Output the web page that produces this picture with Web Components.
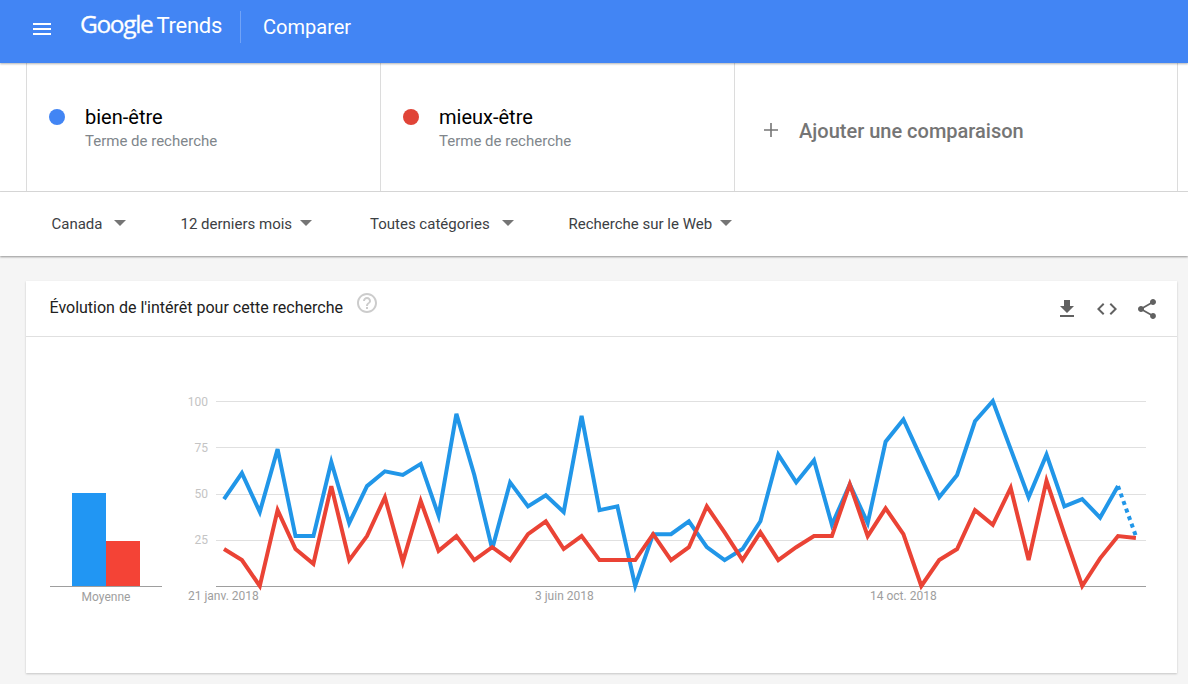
<!DOCTYPE html>
<html lang="fr">
<head>
<meta charset="utf-8">
<title>Google Trends</title>
<style>
    html, body { margin: 0; height: 100%; overflow: hidden; background: #f5f5f5; font-family: Roboto, sans-serif; }
</style>
</head>
<body>
<trends-header></trends-header>
<term-bar>
    <term-item color="#4285f4" name="bien-être" kind="Terme de recherche"></term-item>
    <term-item color="#e04437" name="mieux-être" kind="Terme de recherche"></term-item>
    <add-term>Ajouter une comparaison</add-term>
</term-bar>
<filter-bar>
    <filter-select style="width:129px; --gap:12px">Canada</filter-select>
    <filter-select style="width:189.5px">12 derniers mois</filter-select>
    <filter-select style="width:198.5px; --gap:12px">Toutes catégories</filter-select>
    <filter-select>Recherche sur le Web</filter-select>
</filter-bar>
<trend-card heading="Évolution de l'intérêt pour cette recherche">
    <trend-chart></trend-chart>
</trend-card>

<script>
class TrendsHeader extends HTMLElement {
    constructor() {
        super();
        this.attachShadow({ mode: 'open' });
    }

    connectedCallback() {
        this.shadowRoot.innerHTML = `
            <style>
                :host {
                    display: flex;
                    align-items: center;
                    position: relative;
                    z-index: 2;
                    box-sizing: border-box;
                    height: 63px;
                    padding-bottom: 8px;
                    background: #4285f4;
                    box-shadow: 0 1px 2px rgba(0, 0, 0, 0.3);
                    color: #fff;
                    font-family: Roboto, sans-serif;
                }
                .menu { width: 24px; height: 24px; margin: 2px 0 0 30px; fill: #fff; }
                .logo { display: flex; align-items: baseline; margin: -5px 0 0 26px; white-space: nowrap; }
                .google { font: 400 24.5px/32px "Open Sans", sans-serif; letter-spacing: -1.35px; -webkit-text-stroke: 0.3px #fff; }
                .trends { font: 400 22px/32px Roboto, sans-serif; margin-left: 4px; letter-spacing: -0.25px; }
                .divider { width: 1px; height: 32px; margin: -1px 0 0 18px; background: rgba(255, 255, 255, 0.25); }
                .page { font-size: 20px; margin: -1px 0 0 22px; }
            </style>
            <svg class="menu" viewBox="0 0 24 24"><path d="M3 18h18v-2H3v2zm0-5h18v-2H3v2zm0-7v2h18V6H3z"/></svg>
            <div class="logo"><span class="google">Google</span><span class="trends">Trends</span></div>
            <div class="divider"></div>
            <div class="page">Comparer</div>
        `;
    }
}

class TermBar extends HTMLElement {
    constructor() {
        super();
        this.attachShadow({ mode: 'open' });
    }

    connectedCallback() {
        this.shadowRoot.innerHTML = `
            <style>
                :host {
                    display: block;
                    height: 129px;
                    box-sizing: border-box;
                    background: #fff;
                    border-bottom: 1px solid #dcdcdc;
                    padding: 0 10px 0 26px;
                }
                .row {
                    display: grid;
                    grid-template-columns: 354px 354px 1fr;
                    height: 100%;
                    border-left: 1px solid #dcdcdc;
                    border-right: 1px solid #dcdcdc;
                }
            </style>
            <div class="row"><slot></slot></div>
        `;
    }
}

class TermItem extends HTMLElement {
    constructor() {
        super();
        this.attachShadow({ mode: 'open' });
    }

    connectedCallback() {
        this.shadowRoot.innerHTML = `
            <style>
                :host {
                    display: flex;
                    box-sizing: border-box;
                    border-right: 1px solid #dcdcdc;
                    padding: 40.5px 0 0 22px;
                    font-family: Roboto, sans-serif;
                }
                .dot { width: 16px; height: 16px; margin: 5px 20px 0 0; border-radius: 50%; background: ${this.getAttribute('color')}; }
                .name { font-size: 20px; line-height: 26px; color: #000; }
                .kind { font-size: 15px; line-height: 23px; color: #80868b; }
            </style>
            <div class="dot"></div>
            <div>
                <div class="name">${this.getAttribute('name')}</div>
                <div class="kind">${this.getAttribute('kind')}</div>
            </div>
        `;
    }
}

class AddTerm extends HTMLElement {
    constructor() {
        super();
        this.attachShadow({ mode: 'open' });
    }

    connectedCallback() {
        this.shadowRoot.innerHTML = `
            <style>
                :host {
                    display: flex;
                    align-items: center;
                    padding: 8px 0 0 28px;
                    font: 500 20px Roboto, sans-serif;
                    color: #757575;
                }
                svg { width: 16px; height: 16px; margin: -2px 20px 0 0; stroke: #757575; stroke-width: 1.6; }
            </style>
            <svg viewBox="0 0 16 16"><path d="M8 1v14M1 8h14"/></svg>
            <slot></slot>
        `;
    }
}

class FilterBar extends HTMLElement {
    constructor() {
        super();
        this.attachShadow({ mode: 'open' });
    }

    connectedCallback() {
        this.shadowRoot.innerHTML = `
            <style>
                :host {
                    display: flex;
                    align-items: center;
                    position: relative;
                    height: 64px;
                    padding-left: 51.5px;
                    background: #fff;
                    box-shadow: 0 1px 2px rgba(0, 0, 0, 0.4);
                }
            </style>
            <slot></slot>
        `;
    }
}

class FilterSelect extends HTMLElement {
    constructor() {
        super();
        this.attachShadow({ mode: 'open' });
    }

    connectedCallback() {
        this.shadowRoot.innerHTML = `
            <style>
                :host {
                    display: flex;
                    align-items: center;
                    flex: none;
                    font: 400 15px Roboto, sans-serif;
                    color: #3c4043;
                    white-space: nowrap;
                }
                .arrow {
                    width: 0;
                    height: 0;
                    margin: -3px 0 0 var(--gap, 8px);
                    border-left: 6px solid transparent;
                    border-right: 6px solid transparent;
                    border-top: 6px solid #757575;
                }
            </style>
            <slot></slot>
            <div class="arrow"></div>
        `;
    }
}

class TrendCard extends HTMLElement {
    constructor() {
        super();
        this.attachShadow({ mode: 'open' });
    }

    connectedCallback() {
        this.shadowRoot.innerHTML = `
            <style>
                :host {
                    display: block;
                    width: 1151px;
                    height: 392px;
                    margin: 25px 0 0 26px;
                    background: #fff;
                    box-shadow: 0 1px 2px rgba(0, 0, 0, 0.2);
                    font-family: Roboto, sans-serif;
                }
                header {
                    display: flex;
                    align-items: center;
                    box-sizing: border-box;
                    height: 56px;
                    padding: 0 18px 3px 23.5px;
                    border-bottom: 1px solid #e0e0e0;
                    color: #212121;
                    font-size: 16px;
                }
                .help { width: 24px; height: 24px; margin: -8px 0 0 12px; fill: #ccc; }
                .actions { display: flex; align-items: center; gap: 16px; margin: 3px 0 0 auto; }
                .actions svg { width: 24px; height: 24px; fill: #616161; }
            </style>
            <header>
                <span>${this.getAttribute('heading')}</span>
                <svg class="help" viewBox="0 0 24 24"><path d="M11 18h2v-2h-2v2zm1-16C6.48 2 2 6.48 2 12s4.48 10 10 10 10-4.48 10-10S17.52 2 12 2zm0 18c-4.41 0-8-3.59-8-8s3.59-8 8-8 8 3.59 8 8-3.59 8-8 8zm0-14c-2.21 0-4 1.79-4 4h2c0-1.1.9-2 2-2s2 .9 2 2c0 2-3 1.75-3 5h2c0-2.25 3-2.5 3-5 0-2.21-1.79-4-4-4z"/></svg>
                <div class="actions">
                    <svg viewBox="0 0 24 24"><path d="M19 9h-4V3H9v6H5l7 7 7-7zM5 18v2h14v-2H5z"/></svg>
                    <svg viewBox="0 0 24 24"><path d="M9.4 16.6 4.8 12l4.6-4.6L8 6l-6 6 6 6 1.4-1.4zm5.2 0 4.6-4.6-4.6-4.6L16 6l6 6-6 6-1.4-1.4z"/></svg>
                    <svg viewBox="0 0 24 24"><path d="M18 16.08c-.76 0-1.44.3-1.96.77L8.91 12.7c.05-.23.09-.46.09-.7s-.04-.47-.09-.7l7.05-4.11c.54.5 1.25.81 2.04.81 1.66 0 3-1.34 3-3s-1.34-3-3-3-3 1.34-3 3c0 .24.04.47.09.7L8.04 9.81C7.5 9.31 6.79 9 6 9c-1.66 0-3 1.34-3 3s1.34 3 3 3c.79 0 1.5-.31 2.04-.81l7.12 4.16c-.05.21-.08.43-.08.65 0 1.61 1.31 2.92 2.92 2.92s2.92-1.31 2.92-2.92-1.31-2.92-2.92-2.92z"/></svg>
                </div>
            </header>
            <slot></slot>
        `;
    }
}

const BLUE = [47, 61, 40, 74, 27, 27, 67, 34, 54, 62, 60, 66, 38, 93, 60, 20, 56, 43, 49, 40, 92, 41, 43, 0, 28, 28, 35, 21, 14, 20, 35, 71, 56, 68, 33, 55, 34, 78, 90, 69, 48, 60, 89, 100, 74, 48, 71, 43, 47, 37, 54, 27];
const RED = [20, 14, 0, 41, 20, 12, 54, 14, 27, 48, 13, 46, 19, 27, 14, 21, 14, 28, 35, 20, 27, 14, 14, 14, 28, 14, 21, 43, 29, 14, 29, 14, 21, 27, 27, 55, 27, 42, 28, 0, 14, 20, 41, 33, 53, 14, 57, 28, 0, 15, 27, 26];

class TrendChart extends HTMLElement {
    constructor() {
        super();
        this.attachShadow({ mode: 'open' });
    }

    // chart coordinates are relative to the card body (origin 26,337 on the page)
    points(values) {
        return values.map((v, i) => {
            const x = 198 + i * 17.88;
            const y = 249 - v * 1.85;
            return `${x.toFixed(1)},${y.toFixed(1)}`;
        });
    }

    connectedCallback() {
        const grid = [100, 75, 50, 25].map(v => {
            const y = Math.round(249 - v * 1.85) + 0.5;
            return `<line x1="190" x2="1120" y1="${y}" y2="${y}" stroke="#e0e0e0"/>
                <text x="182" y="${v === 100 || v === 75 ? y + 4 : y + 3}" text-anchor="end" class="tick">${v}</text>`;
        }).join('');
        const dates = [['21 janv. 2018', 162], ['3 juin 2018', 509], ['14 oct. 2018', 844]]
            .map(([label, x]) => `<text x="${x}" y="263" class="date">${label}</text>`).join('');
        const blue = this.points(BLUE);
        const red = this.points(RED);

        this.shadowRoot.innerHTML = `
            <style>
                :host { display: block; }
                svg { display: block; width: 1151px; height: 336px; font-family: Roboto, sans-serif; }
                .tick { font-size: 12px; fill: #c4c4c4; }
                .date { font-size: 12px; fill: #9e9e9e; }
                .avg { font-size: 12px; fill: #9e9e9e; }
                polyline { fill: none; stroke-width: 4; stroke-linejoin: miter; stroke-miterlimit: 4; }
            </style>
            <svg viewBox="0 0 1151 336">
                ${grid}
                <line x1="190" x2="1120" y1="249.5" y2="249.5" stroke="#9e9e9e"/>
                ${dates}
                <rect x="46" y="156" width="34" height="93" fill="#2196f3"/>
                <rect x="80" y="204" width="34" height="45" fill="#f44336"/>
                <line x1="24" x2="136" y1="249.5" y2="249.5" stroke="#9e9e9e"/>
                <text x="80" y="264" text-anchor="middle" class="avg">Moyenne</text>
                <polyline points="${blue.slice(0, 51).join(' ')}" stroke="#2196e8"/>
                <polyline points="${blue.slice(50).join(' ')}" stroke="#2196e8" stroke-dasharray="4 4"/>
                <polyline points="${red.join(' ')}" stroke="#ea4335"/>
            </svg>
        `;
    }
}

customElements.define('trends-header', TrendsHeader);
customElements.define('term-bar', TermBar);
customElements.define('term-item', TermItem);
customElements.define('add-term', AddTerm);
customElements.define('filter-bar', FilterBar);
customElements.define('filter-select', FilterSelect);
customElements.define('trend-card', TrendCard);
customElements.define('trend-chart', TrendChart);
</script>
</body>
</html>
